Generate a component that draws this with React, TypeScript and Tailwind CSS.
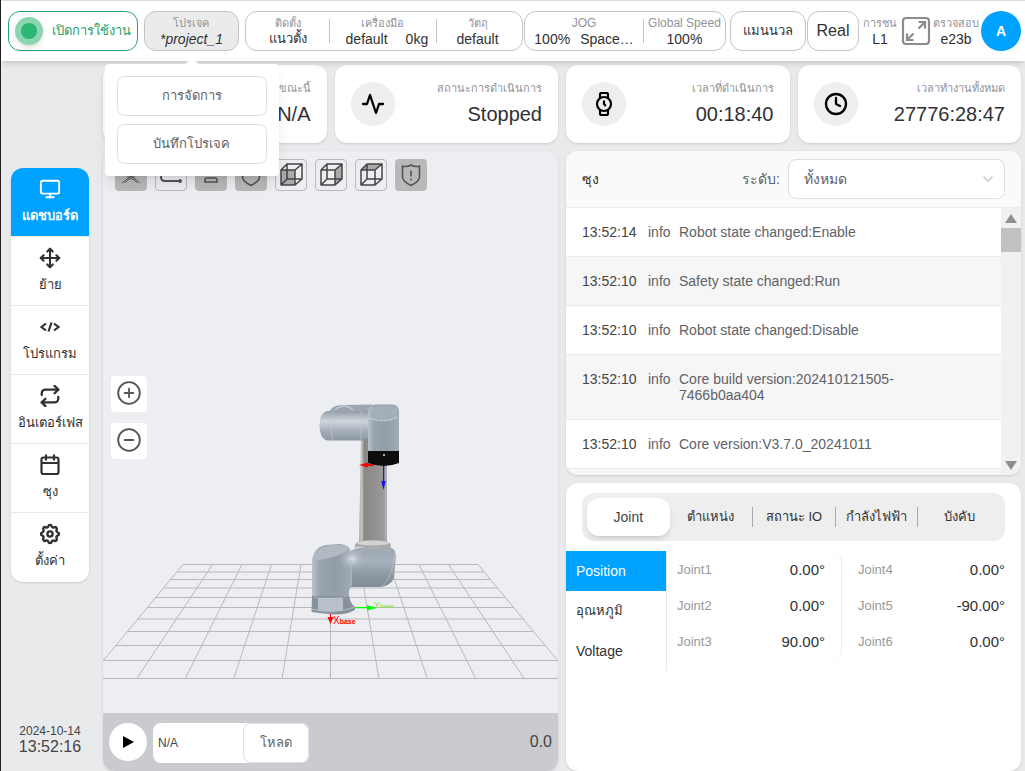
import React from 'react';
import { FiActivity, FiClock, FiMonitor, FiMove, FiRepeat } from 'react-icons/fi';
import { ChevronDown, CircleMinus, CirclePlus } from 'lucide-react';

interface LogEntry {
  time: string;
  level: string;
  message: string;
}

const logs: LogEntry[] = [
  { time: '13:52:14', level: 'info', message: 'Robot state changed:Enable' },
  { time: '13:52:10', level: 'info', message: 'Safety state changed:Run' },
  { time: '13:52:10', level: 'info', message: 'Robot state changed:Disable' },
  { time: '13:52:10', level: 'info', message: 'Core build version:202410121505-7466b0aa404' },
  { time: '13:52:10', level: 'info', message: 'Core version:V3.7.0_20241011' },
];

const joints = [
  [
    { name: 'Joint1', value: '0.00°' },
    { name: 'Joint2', value: '0.00°' },
    { name: 'Joint3', value: '90.00°' },
  ],
  [
    { name: 'Joint4', value: '0.00°' },
    { name: 'Joint5', value: '-90.00°' },
    { name: 'Joint6', value: '0.00°' },
  ],
];

const CodeIcon = () => (
  <svg className="w-[22px] h-[22px]" viewBox="0 0 22 22" fill="none" stroke="currentColor" strokeWidth="2.2">
    <path d="M7 7.500 2.500 11 7 14.500M15 7.500l4.500 3.500-4.500 3.500M12.500 6.500l-3 9" />
  </svg>
);

const CalendarIcon = () => (
  <svg className="w-[22px] h-[22px]" viewBox="0 0 22 22" fill="none" stroke="currentColor" strokeWidth="2.2">
    <rect x="2.500" y="3.500" width="17" height="16.500" rx="2" />
    <path d="M2.500 9h17M7 .5v6M15 .5v6" />
  </svg>
);

const GearIcon = () => (
  <svg className="w-[22px] h-[22px]" viewBox="1 1 22 22" fill="none" stroke="currentColor" strokeWidth="2.4" strokeLinejoin="round">
    <path d="M10.325 4.317c.426-1.756 2.924-1.756 3.350 0a1.724 1.724 0 0 0 2.573 1.066c1.543-.94 3.310.826 2.370 2.370a1.724 1.724 0 0 0 1.065 2.572c1.756.426 1.756 2.924 0 3.350a1.724 1.724 0 0 0-1.066 2.573c.94 1.543-.826 3.310-2.370 2.370a1.724 1.724 0 0 0-2.572 1.065c-.426 1.756-2.924 1.756-3.350 0a1.724 1.724 0 0 0-2.573-1.066c-1.543.94-3.310-.826-2.370-2.370a1.724 1.724 0 0 0-1.065-2.572c-1.756-.426-1.756-2.924 0-3.350a1.724 1.724 0 0 0 1.066-2.573c-.94-1.543.826-3.310 2.370-2.370 1 .608 2.296.07 2.572-1.065z" />
    <circle cx="12" cy="12" r="2.600" />
  </svg>
);

const WatchIcon = () => (
  <svg className="w-6 h-6" viewBox="0 0 24 24" fill="none" stroke="currentColor" strokeWidth="2.200">
    <circle cx="12" cy="12" r="7" />
    <path d="M8 6V2.500Q8 1 9.500 1h5Q16 1 16 2.500V6M8 18v3.500Q8 23 9.500 23h5q1.500 0 1.500-1.500V18M12 8.500V12l1.800 2" />
  </svg>
);

const FullscreenIcon = () => (
  <svg className="w-[30px] h-[30px]" viewBox="0 0 30 30" fill="none" stroke="#8c8c8c" strokeWidth="2.2">
    <rect x="2" y="2" width="26" height="26" rx="3" />
    <path d="M17.500 12.500 24 6M17.500 6H24v6.500M12.500 17.500 6 24M6 17.500V24h6.500" />
  </svg>
);

type CubeFace = 'front' | 'right' | 'top';

const cubeFaces: Record<CubeFace, string> = {
  front: 'M3 8h14v15H3z',
  right: 'M17 8l7-6v15l-7 6z',
  top: 'M3 8l6-6h15l-7 6z',
};

const CubeIcon: React.FC<{ face: CubeFace }> = ({ face }) => (
  <svg className="w-[26px] h-[26px]" viewBox="0 0 26 26" fill="none" stroke="#444" strokeWidth="1.500" strokeLinejoin="round">
    <path d={cubeFaces[face]} fill="#a9a9ab" stroke="none" />
    <path d="M3 8h14v15H3zM3 8l6-6h15l-7 6M24 2v15l-7 6M9 2v15h15M9 17l-6 6" />
  </svg>
);

const ShieldIcon: React.FC<{ alert?: boolean }> = ({ alert }) => (
  <svg className="w-6 h-6" viewBox="0 0 24 24" fill="none" stroke="#555" strokeWidth="1.600" strokeLinejoin="round">
    <path d="M3.500 3Q8 4.500 12 2q4 2.500 8.500 1v11q0 4-8.500 8.500Q3.500 18 3.500 14z" />
    {alert && <path d="M12 7.500v6M12 15.500v2" />}
  </svg>
);

const tools = [
  {
    label: 'Axes',
    filled: true,
    icon: <path d="M12 4v9L3 20M12 13l9 7M6 20q6-9 12 0M8 14h8" strokeWidth="1" />,
  },
  {
    label: 'Path',
    filled: false,
    icon: (
      <>
        <path d="M2 6v8q0 4 4 4h14" strokeWidth="2" />
        <circle cx="21" cy="18" r="1.500" fill="#555" />
      </>
    ),
  },
  { label: 'Tool', filled: true, icon: <path d="M8 3v9M16 3v9M6 19v-2q0-2 2-2h8q2 0 2 2v2z" strokeWidth="1.600" /> },
];

const sideItems = [
  { label: 'แดชบอร์ด', icon: <FiMonitor className="w-[22px] h-[22px]" /> },
  { label: 'ย้าย', icon: <FiMove className="w-[22px] h-[22px]" strokeWidth={2.3} /> },
  { label: 'โปรแกรม', icon: <CodeIcon /> },
  { label: 'อินเตอร์เฟส', icon: <FiRepeat className="w-[22px] h-[22px]" strokeWidth={2.5} /> },
  { label: 'ซุง', icon: <CalendarIcon /> },
  { label: 'ตั้งค่า', icon: <GearIcon /> },
];

const stats = [
  { label: 'โปรแกรมขณะนี้', value: 'N/A', icon: <FiActivity className="w-6 h-6" /> },
  { label: 'สถานะการดำเนินการ', value: 'Stopped', icon: <FiActivity className="w-6 h-6" strokeWidth={2.3} /> },
  { label: 'เวลาที่ดำเนินการ', value: '00:18:40', icon: <WatchIcon /> },
  { label: 'เวลาทำงานทั้งหมด', value: '27776:28:47', icon: <FiClock className="w-6 h-6" strokeWidth={2.3} /> },
];

interface HeaderCellProps {
  label: string;
  labelSize?: string;
  className?: string;
  children: React.ReactNode;
}

const HeaderCell: React.FC<HeaderCellProps> = ({ label, labelSize = 'text-[11px]', className = '', children }) => (
  <div className={`flex flex-col items-center justify-center whitespace-nowrap ${className}`}>
    <span className={`${labelSize} leading-4 text-[#909399]`}>{label}</span>
    <span className="flex text-sm leading-4">{children}</span>
  </div>
);

const Header = () => (
  <header className="relative z-20 h-[61px] shrink-0 bg-white border-t border-[#dcdcdc] shadow-md pl-[7px] pr-1 flex items-center">
    <button className="w-[130px] h-10 shrink-0 rounded-xl border border-[#26a269] text-[#26a269] text-[13px] flex items-center pl-[6px] whitespace-nowrap">
      <span className="w-7 h-7 mr-[9px] shrink-0 rounded-full bg-[#8bd6b0] shadow-md flex items-center justify-center">
        <span className="w-4 h-4 rounded-full bg-[#2bb673]"></span>
      </span>
      เปิดการใช้งาน
    </button>

    <div className="relative ml-[6px] shrink-0">
      <button className="w-[95px] h-10 rounded-xl border border-[#c4c4c4] bg-[#ebebeb] flex items-center justify-center">
        <HeaderCell label="โปรเจค">
          <i>*project_1</i>
        </HeaderCell>
      </button>
      {/* Project menu */}
      <div className="absolute top-[53px] left-1/2 -translate-x-1/2 w-[174px] p-3 flex flex-col gap-2 bg-white rounded shadow-lg text-[13px]">
        <span className="absolute -top-1 left-1/2 -translate-x-1/2 w-3 h-3 rotate-45 bg-white"></span>
        <button className="relative h-10 rounded-lg border border-[#dcdfe6] bg-white text-[#606266]">การจัดการ</button>
        <button className="relative h-10 rounded-lg border border-[#dcdfe6] bg-white text-[#606266]">บันทึกโปรเจค</button>
      </div>
    </div>

    <div className="ml-[6px] h-10 flex-[278] rounded-xl border border-[#c4c4c4] flex items-center divide-x divide-[#c4c4c4]">
      <HeaderCell label="ติดตั้ง" className="w-[84px] h-6">
        <span className="text-[13px]">แนวตั้ง</span>
      </HeaderCell>
      <HeaderCell label="เครื่องมือ" className="flex-[109] h-6">
        <span className="ml-2 mr-[18px]">default</span>
        <span>0kg</span>
      </HeaderCell>
      <HeaderCell label="วัตถุ" className="flex-[84] h-6 pr-1">default</HeaderCell>
    </div>

    <div className="ml-[1px] h-10 flex-[201] rounded-xl border border-[#c4c4c4] flex items-center divide-x divide-[#c4c4c4]">
      <HeaderCell label="JOG" labelSize="text-xs" className="flex-[119] h-6">
        <span className="mr-[10px]">100%</span>
        <span>Space…</span>
      </HeaderCell>
      <HeaderCell label="Global Speed" labelSize="text-xs" className="flex-[82] h-6">100%</HeaderCell>
    </div>

    <button className="ml-1 w-[76px] h-10 shrink-0 rounded-xl border border-[#c4c4c4] text-[13px]">แมนนวล</button>
    <button className="ml-[1px] w-[52px] h-10 shrink-0 rounded-xl border border-[#c4c4c4] text-base">Real</button>
    <HeaderCell label="การชน" className="w-[42px] shrink-0">L1</HeaderCell>
    <button aria-label="Fullscreen" className="shrink-0">
      <FullscreenIcon />
    </button>
    <HeaderCell label="ตรวจสอบ" className="w-[50px] shrink-0">e23b</HeaderCell>
    <button className="w-10 h-10 shrink-0 rounded-full bg-[#00a2ff] text-white text-sm font-bold">A</button>
  </header>
);

const Sidebar = () => (
  <aside className="w-[102px] shrink-0 pl-[10px] pr-[14px] pt-[107px] pb-4 flex flex-col justify-between">
    <nav className="rounded-xl overflow-hidden bg-white shadow divide-y divide-[#e8e8e8]">
      {sideItems.map((item, i) => (
        <button
          key={item.label}
          className={`w-full h-[69px] flex flex-col items-center pt-[10px] gap-[6px] text-[13px] leading-5 whitespace-nowrap ${
            i === 0 ? 'bg-[#00a2ff] text-white font-bold' : ''
          }`}
        >
          {item.icon}
          {item.label}
        </button>
      ))}
    </nav>
    <div className="text-center text-[#444]">
      <div className="text-xs leading-4">2024-10-14</div>
      <div className="text-base leading-4">13:52:16</div>
    </div>
  </aside>
);

const gridRows = [
  { y: 564.5, x1: 183, x2: 478 },
  { y: 572, x1: 177, x2: 484 },
  { y: 579.5, x1: 170, x2: 491 },
  { y: 588, x1: 163, x2: 498 },
  { y: 597.5, x1: 155, x2: 506 },
  { y: 607.5, x1: 147, x2: 514 },
  { y: 619, x1: 137, x2: 524 },
  { y: 631.5, x1: 127, x2: 534 },
  { y: 645.5, x1: 115, x2: 546 },
  { y: 660.5, x1: 103, x2: 558 },
  { y: 678.5, x1: 88, x2: 573 },
];

const RobotScene = () => (
  <svg className="absolute inset-0 w-full h-full" viewBox="103 151 455 562" preserveAspectRatio="xMidYMax slice">
    <defs>
      <linearGradient id="tube" x1="0" y1="0" x2="0" y2="1">
        <stop offset="0" stopColor="#929ca7" />
        <stop offset="0.35" stopColor="#d0d6dd" />
        <stop offset="0.65" stopColor="#a8b1bb" />
        <stop offset="1" stopColor="#8c97a2" />
      </linearGradient>
      <linearGradient id="body" x1="0" y1="0" x2="1" y2="0">
        <stop offset="0" stopColor="#bac2cb" />
        <stop offset="0.2" stopColor="#98a3ae" />
        <stop offset="0.6" stopColor="#929da8" />
        <stop offset="1" stopColor="#a0abb5" />
      </linearGradient>
      <linearGradient id="arm" x1="0" y1="0" x2="1" y2="0">
        <stop offset="0" stopColor="#a5a5a5" />
        <stop offset="0.1" stopColor="#c6c6c6" />
        <stop offset="0.18" stopColor="#8a8887" />
        <stop offset="0.85" stopColor="#9b9997" />
        <stop offset="1" stopColor="#b4b3b2" />
      </linearGradient>
      <radialGradient id="shine">
        <stop offset="0" stopColor="#e9edf1" />
        <stop offset="1" stopColor="#aab4be" stopOpacity="0" />
      </radialGradient>
      <linearGradient id="elbow" x1="0" y1="0" x2="0" y2="1">
        <stop offset="0" stopColor="#9aa5af" />
        <stop offset="0.35" stopColor="#a7b1bb" />
        <stop offset="0.75" stopColor="#8a95a0" />
        <stop offset="1" stopColor="#818c97" />
      </linearGradient>
    </defs>

    {/* Floor */}
    <g stroke="#b7b9bd" strokeWidth="1">
      {gridRows.map((r) => (
        <line key={r.y} x1={r.x1} y1={r.y} x2={r.x2} y2={r.y} />
      ))}
      {[-5, -4, -3, -2, -1, 0, 1, 2, 3, 4, 5].map((n) => (
        <line key={n} x1={330.5 + n * 29.5} y1="564.5" x2={330.5 + n * 48.4} y2="678.5" />
      ))}
    </g>

    {/* Arm */}
    <path d="M361 438H387L387 544H359z" fill="url(#arm)" />
    <path d="M329 412Q333 404 344 405L372 404.500 372 414 329 414z" fill="#9ca6b0" />
    <path d="M335 410Q344 402 353 410" stroke="#c3cad1" strokeWidth="1.200" fill="none" />
    <path d="M327 411H368V438L362 440.500H327Q319.500 438 319.500 425.500T327 411z" fill="url(#tube)" />
    <path d="M333 411Q329 425 333 441M361 411v29" stroke="#c3cad1" strokeWidth="0.600" fill="none" />
    <path d="M368 411Q369 404.500 376 404.500H392Q399 404.500 399 411V452H368z" fill="url(#body)" />
    <path d="M371 408Q384 402 397 408L397 418Q384 424 370 418z" fill="#a9b3bd" opacity="0.7" />
    <path d="M369 418Q384 424 398 417" stroke="#dde2e7" strokeWidth="0.800" fill="none" strokeDasharray="4 1" />
    <path d="M368 451H399V463Q384 469 368 463z" fill="#0d0d0d" />
    <circle cx="384" cy="455" r="1" fill="#ddd" />

    {/* Shoulder */}
    <path d="M349 553Q352 548 366 547L388 547Q396 548 396 556L394 578Q390 587 378 587H349z" fill="url(#elbow)" />
    <path d="M395 555Q393 574 383 586M357 552Q372 545 391 551" stroke="#c0c8cf" strokeWidth="0.600" fill="none" />
    <path d="M355 546Q355 540 373 540T391 546Q391 551 373 548T355 549z" fill="#a9aaaa" />
    <ellipse cx="373" cy="543" rx="16" ry="2.500" fill="#d2d2d0" />
    <path d="M312 560Q314 547 326 545L340 544Q349 545 350 550Q353 556 352 562V585Q349 588 349 592V600H312z" fill="url(#body)" />
    <path d="M313 558Q316 546 333 545Q347 544 349 549Q341 557 313 561z" fill="#b1bac3" />
    <ellipse cx="352" cy="559" rx="13" ry="11" fill="url(#shine)" opacity="0.8" />
    <path d="M351.500 560v25" stroke="#b4bdc6" strokeWidth="0.600" />
    <path d="M312 596H349Q350 603 355 607V610Q344 616 328 614L311.500 612z" fill="#87929d" />
    <path d="M318 598h25v13h-25z" fill="#b8c0c9" />
    <path d="M312 609Q333 615 355 607" stroke="#b4bdc6" strokeWidth="1" fill="none" />
    <path d="M314 597Q330 600 348 596" stroke="#c6cdd4" strokeWidth="0.600" fill="none" strokeDasharray="3 2" />

    {/* Axes */}
    <path d="M359 465l9-2.500v1.500h6v2h-6v1.500z" fill="#f00" />
    <path d="M383 466h1.200v15h1.500l-2.200 9-2.200-9h1.700z" fill="#1414e6" />
    <path d="M355 607h12v-2l10 3-10 2.500v-2.200h-12z" fill="#0f0" />
    <path d="M330 614h1v3h2.500l-3 7-3-7h2.500z" fill="#f00" />
    <text x="333" y="624" fontSize="10" fill="#f00">
      X<tspan fontSize="7" fontWeight="bold">base</tspan>
    </text>
    <text x="374" y="608" fontSize="9" fill="#7fe04f">
      Y<tspan fontSize="6" fontWeight="bold">base</tspan>
    </text>
  </svg>
);

const Viewer = () => (
  <section className="min-w-0 rounded-xl overflow-hidden bg-[#edeef2] shadow flex flex-col">
    <div className="relative flex-1">
      <RobotScene />
      <div className="relative pl-3 pt-2 flex gap-2">
        {tools.map((tool) => (
          <button
            key={tool.label}
            aria-label={tool.label}
            className={`w-8 h-8 rounded border border-[#b9b9b9] flex items-center justify-center ${tool.filled ? 'bg-[#b9b9b9]' : ''}`}
          >
            <svg className="w-6 h-6" viewBox="0 0 24 24" fill="none" stroke="#555">
              {tool.icon}
            </svg>
          </button>
        ))}
        <button aria-label="Safety" className="w-8 h-8 rounded bg-[#b9b9b9] flex items-center justify-center">
          <ShieldIcon />
        </button>
        {(['front', 'right', 'top'] as CubeFace[]).map((face) => (
          <button key={face} aria-label={face} className="w-8 h-8 rounded border border-[#b9b9b9] flex items-center justify-center">
            <CubeIcon face={face} />
          </button>
        ))}
        <button aria-label="Safety alert" className="w-8 h-8 rounded bg-[#b9b9b9] flex items-center justify-center">
          <ShieldIcon alert />
        </button>
      </div>
      <div className="absolute left-2 top-[225px] flex flex-col gap-[11px]">
        <button aria-label="Zoom in" className="w-9 h-9 pb-[2px] rounded bg-white flex items-center justify-center text-[#555]">
          <CirclePlus className="w-[26px] h-[26px]" strokeWidth={1.7} />
        </button>
        <button aria-label="Zoom out" className="w-9 h-9 pb-[2px] rounded bg-white flex items-center justify-center text-[#555]">
          <CircleMinus className="w-[26px] h-[26px]" strokeWidth={1.7} />
        </button>
      </div>
    </div>

    {/* Player */}
    <div className="h-[58px] shrink-0 bg-[#cacbcf] px-[6px] flex items-center">
      <button aria-label="Play" className="w-[38px] h-[38px] shrink-0 rounded-full bg-white flex items-center justify-center">
        <svg className="w-3 h-3" viewBox="0 0 12 12">
          <path d="M1 0l11 6-11 6z" />
        </svg>
      </button>
      <div className="ml-[6px] mt-[2px] h-10 flex items-center rounded-lg bg-white">
        <input
          aria-label="Program"
          readOnly
          value="N/A"
          className="w-[90px] pl-[5px] bg-transparent text-xs text-[#444] outline-none"
        />
        <button className="w-[66px] h-10 rounded-lg border border-[#dcdfe6] text-[13px] text-[#606266]">โหลด</button>
      </div>
      <span className="ml-auto text-base text-[#444]">0.0</span>
    </div>
  </section>
);

const LogPanel = () => (
  <section className="h-[324px] shrink-0 rounded-xl overflow-hidden bg-white shadow flex flex-col">
    <div className="h-[57px] shrink-0 px-4 bg-[#fafafa] border-b border-[#ebebeb] flex items-center text-sm">
      <h2>ซุง</h2>
      <label htmlFor="level" className="ml-auto mr-2 text-[#606266]">
        ระดับ:
      </label>
      <div className="relative w-[217px]">
        <select
          id="level"
          className="w-full h-10 pl-[15px] appearance-none rounded-lg border border-[#dcdfe6] bg-white text-[#606266]"
        >
          <option>ทั้งหมด</option>
        </select>
        <ChevronDown className="absolute right-[9px] top-3 w-4 h-4 text-[#c0c4cc] pointer-events-none" strokeWidth={2} />
      </div>
    </div>
    <div className="flex-1 min-h-0 flex">
      <div className="flex-1 overflow-hidden bg-[#f6f6f6]">
        <table className="w-full text-sm leading-4">
          <tbody>
            {logs.map((log, i) => (
              <tr key={i} className="align-top border-b border-[#ebebeb] odd:bg-white">
                <td className="w-[82px] py-4 pl-4 text-[#444]">{log.time}</td>
                <td className="w-[31px] py-4 text-[#606266]">{log.level}</td>
                <td className="py-4 pr-8 text-[#606266]">{log.message}</td>
              </tr>
            ))}
          </tbody>
        </table>
      </div>
      {/* Scrollbar */}
      <div className="w-5 shrink-0 bg-[#f1f1f1] flex flex-col items-center">
        <svg className="w-5 h-5 shrink-0" viewBox="0 0 20 20" fill="#8f8f8f">
          <path d="M10 6l6 9H4z" />
        </svg>
        <div className="w-full h-6 bg-[#c1c1c1]"></div>
        <svg className="w-5 h-5 shrink-0 mt-auto" viewBox="0 0 20 20" fill="#8f8f8f">
          <path d="M4 6h12l-6 9z" />
        </svg>
      </div>
    </div>
  </section>
);

const JointPanel = () => (
  <section className="flex-1 rounded-xl overflow-hidden bg-white shadow pt-[10px]">
    <div className="mx-4 h-12 p-[5px] rounded-xl bg-[#eee] grid grid-cols-5 items-center text-[13px] whitespace-nowrap">
      <button className="h-[38px] rounded-xl bg-white shadow-md text-sm text-[#444]">Joint</button>
      <button className="h-5 leading-5">ตำแหน่ง</button>
      <button className="h-5 leading-5 border-l border-[#aaa]">สถานะ IO</button>
      <button className="h-5 leading-5 border-l border-[#aaa]">กำลังไฟฟ้า</button>
      <button className="h-5 leading-5 border-l border-[#aaa]">บังคับ</button>
    </div>
    <div className="mt-[10px] flex items-start">
      <div className="w-[101px] shrink-0 border-r border-[#e8e8e8] flex flex-col text-sm">
        <button className="h-10 pl-[10px] text-left bg-[#00a2ff] text-white font-medium">Position</button>
        <button className="h-10 pl-[10px] text-left text-[13px]">อุณหภูมิ</button>
        <button className="h-10 pl-[10px] text-left">Voltage</button>
      </div>
      <div className="flex-1 pt-[1px] grid grid-cols-[175fr_179fr]">
        {joints.map((column, i) => (
          <dl key={i} className={i === 0 ? 'pl-[10px] pr-4 border-r border-[#eee] rounded-lg' : 'px-4'}>
            {column.map((joint) => (
              <div key={joint.name} className="h-9 flex items-center justify-between">
                <dt className="text-[13px] text-[#999]">{joint.name}</dt>
                <dd className="text-[15px]">{joint.value}</dd>
              </div>
            ))}
          </dl>
        ))}
      </div>
    </div>
  </section>
);

export default function App() {
  return (
    <div className="min-h-screen flex flex-col bg-[#e9eaec] border-l border-[#222] text-[#303133] font-['Liberation_Sans',sans-serif]">
      <Header />
      <div className="flex-1 flex">
        <Sidebar />
        <main className="flex-1 min-w-0 pt-1 pr-1 flex flex-col gap-2">
          <div className="grid grid-cols-4 gap-2">
            {stats.map((stat) => (
              <div key={stat.label} className="h-[78px] px-4 rounded-xl bg-white shadow flex items-center justify-between">
                <span className="w-11 h-11 shrink-0 rounded-full bg-[#eee] text-black flex items-center justify-center">
                  {stat.icon}
                </span>
                <div className="text-right whitespace-nowrap">
                  <div className="text-[11px] leading-5 text-[#909399]">{stat.label}</div>
                  <div className="text-xl leading-8">{stat.value}</div>
                </div>
              </div>
            ))}
          </div>
          <div className="flex-1 grid grid-cols-2 gap-2">
            <Viewer />
            <div className="min-w-0 flex flex-col gap-2">
              <LogPanel />
              <JointPanel />
            </div>
          </div>
        </main>
      </div>
    </div>
  );
}
